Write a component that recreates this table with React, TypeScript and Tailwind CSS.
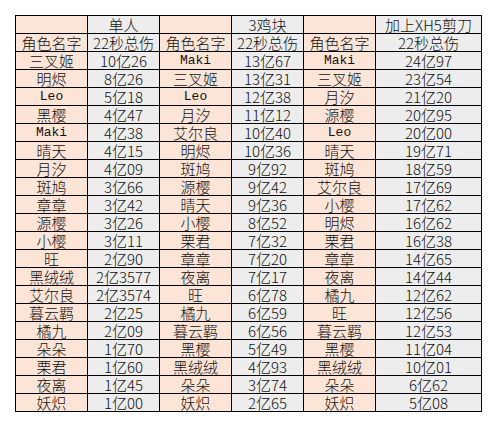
const rows: [string, string, string, string, string, string][] = [
  ["三叉姬", "10亿26", "Maki", "13亿67", "Maki", "24亿97"],
  ["明烬", "8亿26", "三叉姬", "13亿31", "三叉姬", "23亿54"],
  ["Leo", "5亿18", "Leo", "12亿38", "月汐", "21亿20"],
  ["黑樱", "4亿47", "月汐", "11亿12", "源樱", "20亿95"],
  ["Maki", "4亿38", "艾尔良", "10亿40", "Leo", "20亿00"],
  ["晴天", "4亿15", "明烬", "10亿36", "晴天", "19亿71"],
  ["月汐", "4亿09", "斑鸠", "9亿92", "斑鸠", "18亿59"],
  ["斑鸠", "3亿66", "源樱", "9亿42", "艾尔良", "17亿69"],
  ["章章", "3亿42", "晴天", "9亿36", "小樱", "17亿62"],
  ["源樱", "3亿26", "小樱", "8亿52", "明烬", "16亿62"],
  ["小樱", "3亿11", "栗君", "7亿32", "栗君", "16亿38"],
  ["旺", "2亿90", "章章", "7亿20", "章章", "14亿65"],
  ["黑绒绒", "2亿3577", "夜离", "7亿17", "夜离", "14亿44"],
  ["艾尔良", "2亿3574", "旺", "6亿78", "橘九", "12亿62"],
  ["暮云羁", "2亿25", "橘九", "6亿59", "旺", "12亿56"],
  ["橘九", "2亿09", "暮云羁", "6亿56", "暮云羁", "12亿53"],
  ["朵朵", "1亿70", "黑樱", "5亿49", "黑樱", "11亿04"],
  ["栗君", "1亿60", "黑绒绒", "4亿93", "黑绒绒", "10亿01"],
  ["夜离", "1亿45", "朵朵", "3亿74", "朵朵", "6亿62"],
  ["妖炽", "1亿00", "妖炽", "2亿65", "妖炽", "5亿08"],
];

const header1 = ["", "单人", "", "3鸡块", "", "加上XH5剪刀"];
const header2 = ["角色名字", "22秒总伤", "角色名字", "22秒总伤", "角色名字", "22秒总伤"];

function Cell({ text, col }: { text: string; col: number }) {
  const latin = /^[A-Za-z]+$/.test(text);
  return (
    <div
      className={
        "h-[18px] border-r border-b border-black flex items-center justify-center overflow-hidden whitespace-nowrap " +
        (col % 2 === 0 ? "bg-[#fce4d6]" : "bg-[#ededed]")
      }
    >
      {latin ? (
        <span className="block font-['Liberation_Mono',monospace] text-[13px] leading-[17px]">{text}</span>
      ) : (
        <span className="block text-[15px] leading-[17px] font-light">{text}</span>
      )}
    </div>
  );
}

export default function App() {
  return (
    <div className="w-[496px] h-[427px] bg-white pt-[15px] pl-[15px] font-['Noto_Sans_CJK_SC',sans-serif] text-[#111]">
      <div className="grid grid-cols-[72px_72px_72px_72px_72px_106px] w-[467px] border-l border-t border-black">
        {header1.map((t, i) => (
          <Cell key={"h1" + i} text={t} col={i} />
        ))}
        {header2.map((t, i) => (
          <Cell key={"h2" + i} text={t} col={i} />
        ))}
        {rows.map((r, ri) =>
          r.map((t, i) => <Cell key={ri + "-" + i} text={t} col={i} />)
        )}
      </div>
    </div>
  );
}
